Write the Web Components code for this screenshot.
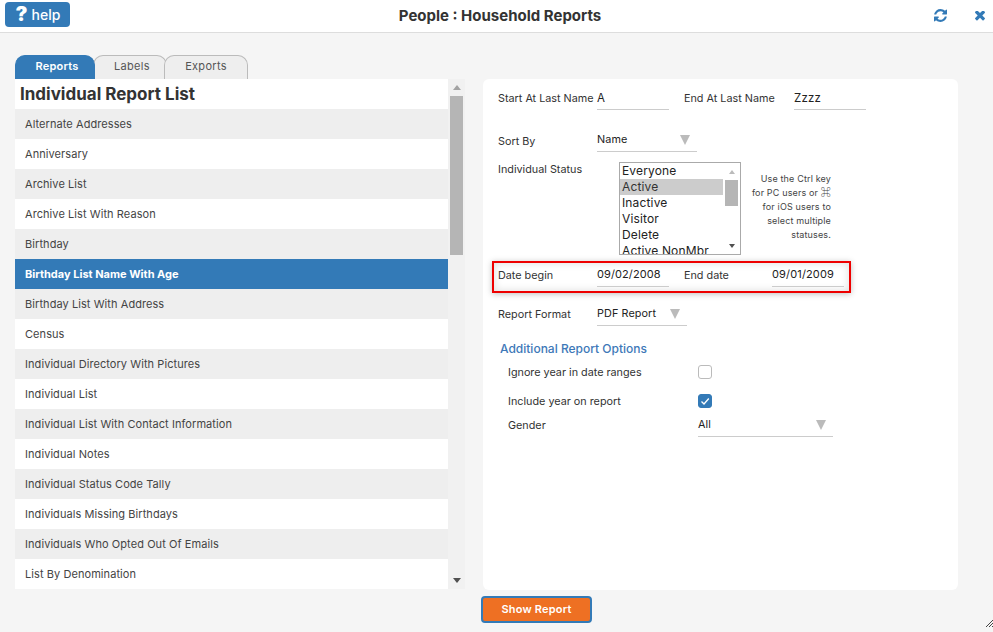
<!DOCTYPE html>
<html><head><meta charset="utf-8"><title>People : Household Reports</title>
<style>
html,body{margin:0;padding:0;height:632px;overflow:hidden;background:#f5f5f5;font-family:Inter,"Liberation Sans",sans-serif;color:#333}
</style></head><body>
<app-header></app-header>
<report-page></report-page>
<script>
function def(name, html){
  customElements.define(name, class extends HTMLElement{
    constructor(){super();this.attachShadow({mode:'open'}).innerHTML=html;}
  });
}
def('app-header',`<style>
:host{display:flex;align-items:flex-start;height:32px;background:#fff;border-bottom:1px solid #ddd}
.help{margin:2px 0 0 5px;width:65px;height:25px;background:#337ab7;border-radius:4px;color:#fff;display:flex;align-items:center;justify-content:center;gap:4px;font-size:14px;font-weight:500;box-sizing:border-box;padding-left:1px}
.help b{font-size:20px;font-weight:900;line-height:25px}
h1{flex:1;margin:7px 0 0;padding-right:4px;text-align:center;font-size:15px;line-height:17px;font-weight:700;color:#333}
.ic{display:flex;gap:28px;margin:9px 8px 0 0;align-items:center}
svg{display:block;fill:#337ab7}
</style><div class="help"><b>?</b><span>help</span></div><h1>People : Household Reports</h1>
<div class="ic"><svg width="13" height="13" viewBox="0 0 1536 1536"><path d="M1511 928q0 5-1 7-64 268-268 434.5t-478 166.5q-146 0-282.5-55t-243.5-157l-129 129q-19 19-45 19t-45-19-19-45v-448q0-26 19-45t45-19h448q26 0 45 19t19 45-19 45l-137 137q71 66 161 102t187 36q134 0 250-65t186-179q11-17 53-117 8-23 30-23h192q13 0 22.5 9.5t9.5 22.5zm25-800v448q0 26-19 45t-45 19h-448q-26 0-45-19t-19-45 19-45l138-138q-148-137-349-137-134 0-250 65t-186 179q-11 17-53 117-8 23-30 23h-199q-13 0-22.5-9.5t-9.5-22.5v-7q65-268 270-434.5t480-166.5q146 0 284 55.5t245 156.5l130-129q19-19 45-19t45 19 19 45z"/></svg>
<svg width="10" height="10" viewBox="110 372 1188 1048"><path d="M1298 1188q0 40-28 68l-136 136q-28 28-68 28t-68-28l-294-294-294 294q-28 28-68 28t-68-28l-136-136q-28-28-28-68t28-68l294-294-294-294q-28-28-28-68t28-68l136-136q28-28 68-28t68 28l294 294 294-294q28-28 68-28t68 28l136 136q28 28 28 68t-28 68l-294 294 294 294q28 28 28 68z"/></svg></div>`);

def('tab-bar',`<style>
:host{display:flex;height:24px;align-items:stretch;font-size:11px}
div{box-sizing:border-box;display:flex;align-items:center;justify-content:center;border:1px solid #bbb;border-bottom:none;border-radius:10px 10px 0 0;background:#eee;color:#555;letter-spacing:.3px;padding-bottom:3px;position:relative}
.a{width:80px;background:#337ab7;border-color:#337ab7;color:#fff;font-weight:600;z-index:3;padding-left:4px;letter-spacing:.2px}
.b{width:74px;margin-left:-2px;padding-left:4px;z-index:1}
.c{width:84px;margin-left:-3px;z-index:2}
</style><div class="a">Reports</div><div class="b">Labels</div><div class="c">Exports</div>`);

const items=["Alternate Addresses","Anniversary","Archive List","Archive List With Reason","Birthday","Birthday List Name With Age","Birthday List With Address","Census","Individual Directory With Pictures","Individual List","Individual List With Contact Information","Individual Notes","Individual Status Code Tally","Individuals Missing Birthdays","Individuals Who Opted Out Of Emails","List By Denomination"];
def('report-list',`<style>
:host{display:flex;width:450px;height:510px;background:#fff}
.m{width:433px;overflow:hidden}
h2{margin:0;height:30px;line-height:30px;padding-left:5px;font-size:17px;font-weight:700;color:#333}
.r{height:30px;line-height:30px;padding-left:10px;font-size:11px;letter-spacing:.07px;color:#444;background:#fff}
.r:nth-of-type(odd){background:#eee}
.r.s{background:#337ab7;color:#fff;font-weight:700;letter-spacing:0}
.sb{width:17px;background:#f1f1f1;display:flex;flex-direction:column;align-items:center}
.up,.dn{height:17px;width:17px;display:flex;align-items:center;justify-content:center;flex:none}
.up i{border:4px solid transparent;border-bottom:5px solid #a3a3a3;border-top:0}
.dn i{border:4px solid transparent;border-top:5px solid #505050;border-bottom:0}
.th{width:13px;height:159px;background:#b5b5b5;flex:none}
.sp{flex:1}
</style><div class="m"><h2>Individual Report List</h2>${items.map(t=>`<div class="r${t==='Birthday List Name With Age'?' s':''}">${t}</div>`).join('')}</div>
<div class="sb"><div class="up"><i></i></div><div class="th"></div><div class="sp"></div><div class="dn"><i></i></div></div>`);

const fieldCss=`:host{display:block;box-sizing:border-box;height:24px;border-bottom:1px solid #ccc;font-size:10.8px;line-height:19px;padding-top:var(--pt,2px);color:#222;position:relative;letter-spacing:.1px}`;
def('line-input',`<style>${fieldCss}</style><slot></slot>`);
def('drop-select',`<style>${fieldCss}
i{position:absolute;right:7px;top:7px;border-left:5px solid transparent;border-right:5px solid transparent;border-top:10px solid #bbb}
</style><slot></slot><i></i>`);
def('check-box',`<style>
:host{display:block;width:14px;height:14px;box-sizing:border-box;border:1px solid #bbb;border-radius:3px;background:#fff}
:host([checked]){background:#337ab7;border-color:#337ab7}
svg{display:none;width:12px;height:12px}
:host([checked]) svg{display:block}
</style><svg viewBox="0 0 12 12"><path d="M2.5 6.5 5 9l4.8-5.5" fill="none" stroke="#fff" stroke-width="1.3"/></svg>`);
def('status-list',`<style>
:host{display:flex;width:122px;height:93px;box-sizing:border-box;border:1px solid #aaa;background:#fff;overflow:hidden;font-size:12px;letter-spacing:.15px;color:#222}
.m{width:103px}
.o{height:16px;line-height:16px;padding-left:2px;white-space:nowrap}
.o.s{background:#ccc;color:#333}
.sb{width:17px;display:flex;flex-direction:column;align-items:center}
.up,.dn{height:17px;flex:none;display:flex;align-items:center}
.up i{border:3.5px solid transparent;border-bottom:4px solid #bbb;border-top:0}
.dn i{border:3.5px solid transparent;border-top:4px solid #505050;border-bottom:0}
.th{width:13px;height:26px;background:#b5b5b5;flex:none}
.sp{flex:1}
</style><div class="m"><div class="o">Everyone</div><div class="o s">Active</div><div class="o">Inactive</div><div class="o">Visitor</div><div class="o">Delete</div><div class="o">Active NonMbr</div></div>
<div class="sb"><div class="up"><i></i></div><div class="th"></div><div class="sp"></div><div class="dn"><i></i></div></div>`);

def('report-form',`<style>
:host{display:block;box-sizing:border-box;width:475px;height:511px;background:#fff;border-radius:6px;padding:7px 0 0 15px;font-size:10.8px;color:#333}
.row{display:flex;align-items:flex-start}
label{display:block;line-height:16px;white-space:nowrap;padding-top:5px}
.l1{width:99px}.l2{width:110px;margin-left:15px}
.box{margin:6px 0 0 -6px;padding:0 0 0 4px;width:359px;height:32px;box-sizing:border-box;border:2px solid #e00;box-shadow:0 1px 6px rgba(0,0,0,.25),inset 0 0 8px rgba(0,0,0,.14);display:flex}
.hint{width:90px;text-align:right;font-size:9px;line-height:14px;color:#444;padding-top:10px;letter-spacing:.15px}
.hint span{font-family:"Noto Sans CJK JP",sans-serif;font-size:10px;line-height:0}
h3{margin:15px 0 0 2px;font-size:12px;line-height:16px;font-weight:500;color:#3d78b8}
.opt{display:flex;align-items:center;padding-left:10px;height:14px}
.opt label{width:190px;padding:2px 0 0}
</style>
<div class="row"><label class="l1">Start At Last Name</label><line-input style="width:72px;--pt:3px;font-size:11.5px">A</line-input><label class="l2">End At Last Name</label><line-input style="width:72px;--pt:3px;font-size:11.5px;letter-spacing:.2px">Zzzz</line-input></div>
<div class="row" style="margin-top:18px"><label class="l1" style="padding-top:6px">Sort By</label><drop-select style="width:100px">Name</drop-select></div>
<div class="row" style="margin-top:10px;height:93px"><label class="l1" style="width:121px;padding-top:1px;line-height:14px">Individual Status</label><status-list></status-list><div class="hint">Use the Ctrl key<br>for PC users or <span>⌘</span><br>for iOS users to<br>select multiple<br>statuses.</div></div>
<div class="box"><label class="l1">Date begin</label><line-input style="width:72px;font-size:11px">09/02/2008</line-input><label style="width:88px;margin-left:15px">End date</label><line-input style="width:72px;font-size:11px;letter-spacing:.15px">09/01/2009</line-input></div>
<div class="row" style="margin-top:9px"><label class="l1">Report Format</label><drop-select style="width:90px">PDF Report</drop-select></div>
<h3>Additional Report Options</h3>
<div class="opt" style="margin-top:8px"><label>Ignore year in date ranges</label><check-box></check-box></div>
<div class="opt" style="margin-top:15px"><label>Include year on report</label><check-box checked></check-box></div>
<div class="row" style="margin-top:5px;padding-left:10px;height:24px"><label style="width:190px">Gender</label><drop-select style="width:135px">All</drop-select></div>`);

def('report-page',`<style>
:host{display:block;position:relative;height:599px;padding:22px 0 0 15px;box-sizing:border-box}
.cols{display:flex;align-items:flex-start}
.left{width:468px}
.btn{box-sizing:border-box;width:111px;height:27px;margin:6px 0 0 466px;background:#ee7023;border:2px solid #337ab7;border-radius:4px;color:#fff;font-size:11px;font-weight:600;line-height:23px;text-align:center;letter-spacing:.2px}
.grip{position:absolute;right:0;bottom:5px;display:block}
</style>
<div class="cols"><div class="left"><tab-bar></tab-bar><report-list></report-list></div><report-form style="margin-top:24px"></report-form></div>
<div class="btn">Show Report</div>
<svg class="grip" width="7" height="7" viewBox="0 0 7 7"><path d="M0 7 7 0M3 7l4-4M6 7l1-1" stroke="#444" stroke-width="1"/></svg>`);
</script>
</body></html>
